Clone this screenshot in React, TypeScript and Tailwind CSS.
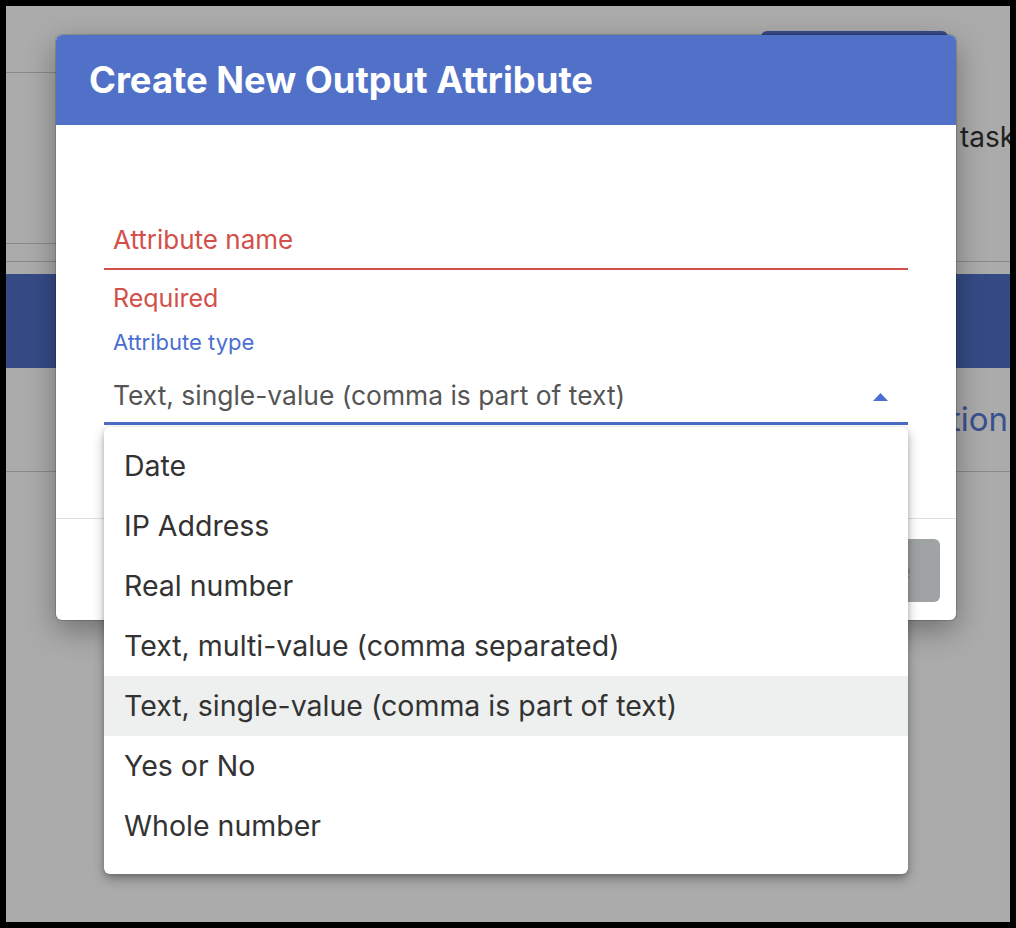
import React from "react";

const OPTIONS = [
  "Date",
  "IP Address",
  "Real number",
  "Text, multi-value (comma separated)",
  "Text, single-value (comma is part of text)",
  "Yes or No",
  "Whole number",
];

const SELECTED = "Text, single-value (comma is part of text)";

/** The page that sits behind the dialog (mostly hidden by it). */
function BackgroundPage() {
  return (
    <div className="flex flex-col">
      <div className="flex h-[67px] items-end">
        <div className="h-px flex-1 bg-[#cccccc]" />
        <div className="ml-[6px] mr-[62px] h-[42px] w-[187px] self-end rounded-t-md bg-[#5171c8]" />
      </div>
      <div className="mt-[46px] ml-[954px] whitespace-nowrap text-[28px] leading-[36px] text-[#333]">
        task
      </div>
      <div className="mt-[88px] h-px w-[500px] bg-[#cccccc]" />
      <div className="mt-[17px] h-px bg-[#cccccc]" />
      <div className="mt-[12px] h-[94px] bg-[#5171c8]" />
      <div className="flex h-[104px] items-center justify-end border-b border-[#cccccc] pr-[2px]">
        <span className="whitespace-nowrap text-[33px] text-[#5878d6]">Action</span>
      </div>
    </div>
  );
}

function CaretUp() {
  return (
    <svg width="15" height="8" viewBox="0 0 15 8" aria-hidden className="mt-[4px] shrink-0">
      <polygon points="0,8 7.5,0 15,8" fill="#4b6fd1" />
    </svg>
  );
}

function CreateAttributeDialog() {
  return (
    <div className="absolute left-[50px] top-[29px] w-[900px] overflow-hidden rounded-md bg-white shadow-[0_10px_30px_rgba(0,0,0,0.35)] ring-1 ring-black/15">
      <div className="flex h-[90px] items-center bg-[#5171c8] pl-[33px]">
        <h2 className="text-[36.4px] font-bold leading-[40px] text-white">Create New Output Attribute</h2>
      </div>

      <div className="px-[48px] pb-[93px] pt-[97px]">
        {/* Attribute name — empty, in error */}
        <div className="flex h-[48px] items-start border-b-2 border-[#d3504a] px-[9px]">
          <span className="text-[26px] leading-[36px] text-[#d3504a]">Attribute name</span>
        </div>
        <p className="mt-[13px] px-[9px] text-[25px] leading-[30px] text-[#d3504a]">Required</p>

        {/* Attribute type — select, focused */}
        <p className="mt-[15px] px-[9px] text-[22px] leading-[28px] text-[#4b6fd1]">Attribute type</p>
        <div className="mt-[23px] flex items-center justify-between border-b-[3px] border-[#4d6cc7] pb-[11px] pl-[9px] pr-[20px]">
          <span className="text-[26.4px] leading-[32px] text-[#555]">{SELECTED}</span>
          <CaretUp />
        </div>
      </div>

      <div className="flex items-center justify-end gap-3 border-t border-[#e0e0e0] pb-[18px] pr-[16px] pt-[20px]">
        <button type="button" className="h-[63px] px-[24px] text-[26px] font-semibold text-[#4b6fd1]">
          Cancel
        </button>
        <button
          type="button"
          disabled
          className="h-[63px] w-[120px] rounded-md bg-[#a0a3a4] text-[26px] font-semibold text-[#868989]"
        >
          Save
        </button>
      </div>
    </div>
  );
}

function OptionsMenu() {
  return (
    <ul className="absolute left-[98px] top-[421px] w-[804px] rounded-md bg-white pb-[18px] pt-[9px] shadow-[0_5px_12px_rgba(0,0,0,0.3),0_2px_4px_rgba(0,0,0,0.15)]">
      {OPTIONS.map((opt) => (
        <li
          key={opt}
          className={
            "flex h-[60px] items-center pl-[20px] text-[28.5px] text-[#333] " +
            (opt === SELECTED ? "bg-[#eef0ef]" : "")
          }
        >
          {opt}
        </li>
      ))}
    </ul>
  );
}

export default function App() {
  return (
    <div className="h-[928px] w-[1016px] bg-black p-[6px] font-['Inter','Noto_Sans',sans-serif]">
      <div className="relative h-full w-full overflow-hidden bg-white">
        <BackgroundPage />
        <div className="absolute inset-0 bg-black/[0.33]" />
        <CreateAttributeDialog />
        <OptionsMenu />
      </div>
    </div>
  );
}
